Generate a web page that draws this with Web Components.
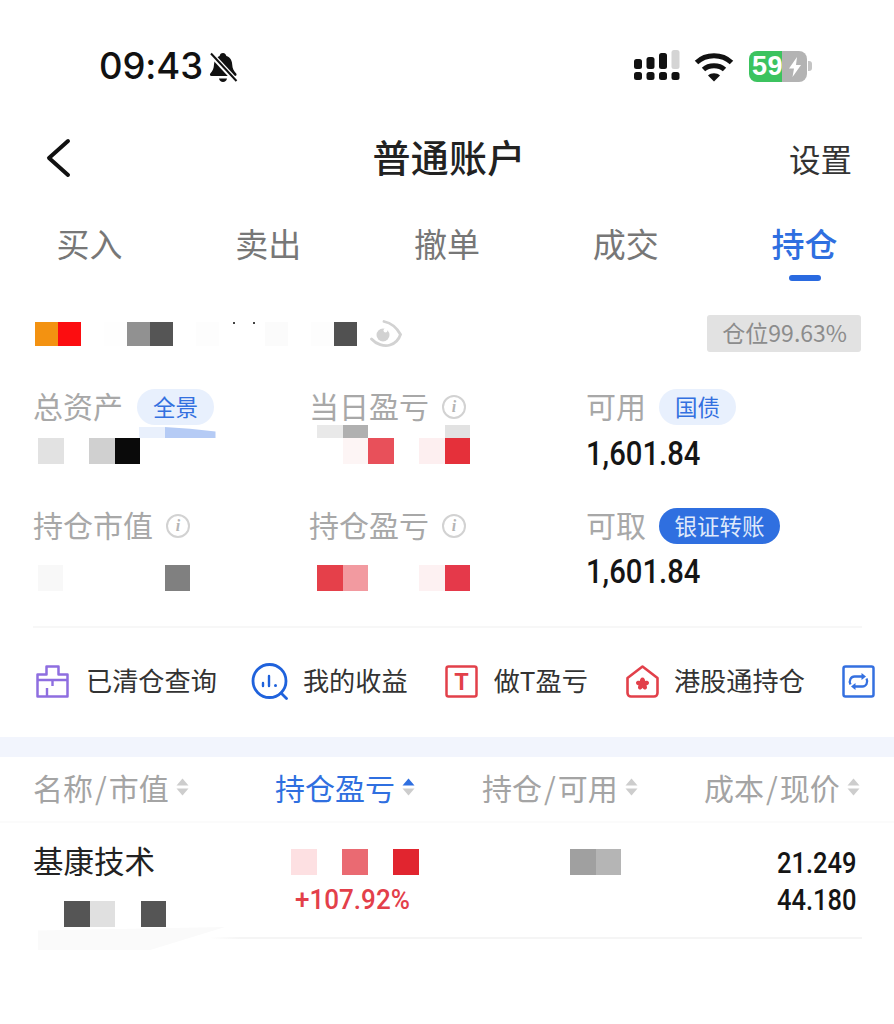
<!DOCTYPE html>
<html lang="zh"><head><meta charset="utf-8"><title>普通账户</title>
<style>
html,body{margin:0;padding:0;background:#fff}
body{width:894px;height:1024px;overflow:hidden;font-family:"Noto Sans CJK SC","Liberation Sans",sans-serif;color:#222}
</style></head><body>
<template id="t-status"><style>
:host{display:flex;align-items:center;height:132px;padding:0 82px 0 99px;box-sizing:border-box}
.time{font:500 36.500px/1 Inter,sans-serif;color:#111;letter-spacing:-.1px}
.bell{margin-left:5px;margin-top:2px}
.right{margin-left:auto;display:flex;align-items:center}
.wifi{margin-left:14px}
.bat{margin-left:15px;width:58px;height:31px;border-radius:8px;position:relative;overflow:hidden;background:linear-gradient(90deg,#3cc35f 0 33px,#b3b3b3 33px);color:#fff;font:700 27px/31px "Liberation Sans",sans-serif;padding-left:3px;box-sizing:border-box;letter-spacing:.5px}
.nub{width:4px;height:10px;background:#c4c4c4;border-radius:0 3px 3px 0;margin-left:1px}
.bolt{position:absolute;left:39px;top:6px}
</style><span class="time">09:43</span>
<svg class="bell" width="31" height="32" viewBox="0 0 31 32"><path d="M15 2c2 0 3 1.500 3.400 3 4 1.300 5.600 4.500 5.800 8.500.2 4 1.500 6.500 4 9 .8 1 .2 2.500-1.200 2.500H3.500c-1.400 0-2-1.500-1.200-2.500 2.500-2.500 3.500-5 3.700-9 .2-4 2-7.200 5.600-8.500C12 3 13 2 15 2Z" fill="#111"/><path d="M11 27.500h8c-.3 2-2 3.500-4 3.500s-3.700-1.500-4-3.500Z" fill="#111"/><path d="M3 3l25 27" stroke="#fff" stroke-width="5.500"/><path d="M3 2.500l25.500 27.500" stroke="#111" stroke-width="2"/></svg>
<span class="right">
<svg width="46" height="32" viewBox="0 0 46 32"><g fill="#111"><rect x="0" y="22" width="8" height="8" rx="2.500"/><rect x="12.500" y="22" width="8" height="8" rx="2.500"/><rect x="25" y="22" width="8" height="8" rx="2.500"/><rect x="37.500" y="22" width="8" height="8" rx="2.500"/><rect x="0" y="9" width="8" height="10" rx="2.500"/><rect x="12.500" y="7" width="8" height="12" rx="2.500"/><rect x="25" y="3" width="8" height="16" rx="2.500"/></g><rect x="37.500" y="0" width="8" height="19" rx="2.500" fill="#d4d4d4"/></svg>
<svg class="wifi" width="40" height="31" viewBox="0 0 40 31" fill="none" stroke="#111" stroke-linecap="butt"><path d="M2.500 11.500C12 2.500 28 2.500 37.500 11.500" stroke-width="5"/><path d="M9.500 18.500C15 13.500 25 13.500 30.500 18.500" stroke-width="5"/><path d="M14 24.500c3-3 9-3 12 0L20 30.500Z" fill="#111" stroke="none"/></svg>
<span class="bat">59<svg class="bolt" width="14" height="20" viewBox="0 0 14 20"><path d="M9 0 1 11.500h5L4.500 20 13 8H8Z" fill="#fff"/></svg></span><span class="nub"></span>
</span></template>

<template id="t-nav"><style>
:host{display:grid;grid-template-columns:1fr auto 1fr;align-items:center;height:52px;padding:0 42px 0 46px}
.title{font:500 38px/48px "Noto Sans CJK SC",sans-serif;color:#222;letter-spacing:.3px;padding-bottom:4px}
.set{justify-self:end;font:400 31.500px/52px "Noto Sans CJK SC",sans-serif;color:#333}
svg{display:block}
</style><svg width="26" height="40" viewBox="0 0 26 40" fill="none" stroke="#111" stroke-width="4" stroke-linecap="round" stroke-linejoin="round"><path d="M22 3 3 20l19 17"/></svg><span class="title"><slot></slot></span><span class="set"><slot name="action"></slot></span></template>

<template id="t-tabs"><style>
:host{display:grid;grid-template-columns:repeat(5,1fr);padding-top:36px}
</style><slot></slot></template>

<template id="t-tab"><style>
:host{display:flex;flex-direction:column;align-items:center;font:400 33px/46px "Noto Sans CJK SC",sans-serif;color:#777}
:host([active]){color:#2f6fe0;font-weight:500}
i{display:block;width:32px;height:6px;margin-top:9px;border-radius:3px;background:transparent}
:host([active]) i{background:#2a6ae0}
</style><slot></slot><i></i></template>

<template id="t-mosaic"><style>
:host{display:flex;align-items:flex-end}
span{display:block;flex:none}
</style></template>

<template id="t-acct"><style>
:host{display:flex;align-items:center;height:37px;margin-top:34px;padding:0 33px 0 35px}
svg{margin-left:13px;display:block}
.badge{margin-left:auto;height:37px;padding:0 14px 0 15px;background:#e2e2e2;border-radius:3px;color:#8c8c8c;font:400 23px/35px "Noto Sans CJK SC",sans-serif;box-sizing:border-box;white-space:nowrap}
</style><slot name="m"></slot><svg width="32" height="28" viewBox="0 0 32 28" fill="none" stroke="#d2d2d2"><path d="M1.500 19C6 24 14 27 20 25c5-1.500 9-6 10.500-10.500C27 8 21 3 14 1.500" stroke-width="2.800" stroke-linecap="round"/><circle cx="13" cy="15" r="6.500" fill="#d2d2d2" stroke="none"/><circle cx="15.500" cy="10.500" r="2" fill="#fff" stroke="none"/></svg><span class="badge"><slot></slot></span></template>

<template id="t-stats"><style>
:host{display:grid;grid-template-columns:276px 277px 1fr;grid-template-rows:119px 119px;margin-top:37px;padding-left:34px}
</style><slot></slot></template>

<template id="t-stat"><style>
:host{display:block}
.l{display:flex;align-items:center;height:36px;font:400 30px/32px "Noto Sans CJK SC",sans-serif;color:#a8a8a8}
::slotted(span){padding-bottom:4px;margin-left:-1px}
</style><div class="l"><slot name="label"></slot></div><slot></slot></template>

<template id="t-pill"><style>
:host{display:inline-block;height:36px;padding:0 16px;margin-left:14px;border-radius:18px;background:#e8f0fd;color:#3370e0;font:400 22.500px/35px "Noto Sans CJK SC",sans-serif}
:host([solid]){background:#2f6fe0;color:#dfe9fb;padding:0 15.500px}
</style><slot></slot></template>

<template id="t-info"><style>
:host{display:inline-block;width:24px;height:24px;margin-left:13px;margin-top:-1px;box-sizing:border-box;border:2px solid #d2d2d2;border-radius:50%;color:#b5b5b5;font:italic 700 16px/20px "Liberation Serif",serif;text-align:center}
</style>i</template>

<template id="t-num"><style>
:host{display:block;width:max-content;margin-left:-1px;font:500 34px/36px Roboto,sans-serif;color:#151515;transform:scaleX(.86);transform-origin:0 50%}
</style><slot></slot></template>

<template id="t-shortcuts"><style>
:host{display:flex;align-items:center;height:111px;margin:-1px 32px 0 33px;padding-left:3px;border-top:2px solid #f7f7f7;box-sizing:border-box;white-space:nowrap;gap:36px}
</style><slot></slot></template>

<template id="t-shortcut"><style>
:host{display:inline-flex;align-items:center;flex:none;font:400 26.200px/36px "Noto Sans CJK SC",sans-serif;color:#333;position:relative;top:-1px}
::slotted(svg){display:block;margin-right:17px;flex:none}
.t{display:block;margin-top:-3px}
</style><slot name="icon"></slot><span class="t"><slot></slot></span></template>

<template id="t-band"><style>:host{display:block;height:20px;background:#f2f5fd}</style></template>

<template id="t-grid"><style>
:host{display:grid;grid-template-columns:242px 207px 222px 1fr;padding-left:34px;padding-right:34px}
:host([head]){height:66px;align-items:center;border-bottom:2px solid #fbfbfb;box-sizing:border-box;padding-bottom:4px}
:host([row]){height:116px;padding-top:26px;box-sizing:border-box;margin-right:32px;padding-right:6px;background:linear-gradient(90deg,#fff 210px,#f5f5f5 240px) 0 100%/100% 2px no-repeat}
</style><slot></slot></template>

<template id="t-th"><style>
:host{display:inline-flex;align-items:center;font:400 30px/40px "Noto Sans CJK SC",sans-serif;color:#a4a4a4;white-space:nowrap;margin-left:-1px}
:host([active]){color:#2f6fe0}
svg{margin-left:7px;display:block}
.u{fill:#cdcdcd}.d{fill:#cdcdcd}
:host([active]) .u{fill:#2f6fe0}
::slotted(b){font-weight:400;padding:0 2px}
</style><slot></slot><svg width="13" height="20" viewBox="0 0 13 20"><path class="u" d="M6.500 1.500 12.500 8.500H.5Z"/><path class="d" d="M6.500 18.500 12.500 11.500H.5Z"/></svg></template>

<template id="t-cell"><style>
:host{display:block}
</style><slot></slot></template>

<template id="t-fig"><style>
:host{display:block;width:max-content;font:500 30px/26px Roboto,sans-serif;color:#151515;transform:scaleX(.85);transform-origin:100% 50%;margin-left:auto;margin-right:-1px}
:host([pct]){font-size:28px;color:#e3404a;transform:scaleX(.93);transform-origin:0 50%;margin-left:19px;margin-right:0;margin-top:12px}
</style><slot></slot></template>

<x-status></x-status>
<x-nav>普通账户<span slot="action">设置</span></x-nav>
<x-tabs><x-tab>买入</x-tab><x-tab>卖出</x-tab><x-tab>撤单</x-tab><x-tab>成交</x-tab><x-tab active>持仓</x-tab></x-tabs>
<x-acct><x-mosaic slot="m" w="23" h="24" cells="#f39211,#fc0d10,-,#fefefe,#919191,#555,-,#fdfdfd,radial-gradient(circle at 15px 1px,#444 1px,transparent 1.500px),radial-gradient(circle at 12px 1px,#444 1px,transparent 1.500px),#fbfbfb,-,#fdfdfd,#515151"></x-mosaic>仓位99.63%</x-acct>
<x-stats>
<x-stat><span slot="label">总资产</span><x-pill slot="label">全景</x-pill>
 <x-mosaic h="11" w="25.500" style="margin-left:105px;margin-top:2px" cells="#e9f0fc,#b5cbf5,#b5cbf5" clip></x-mosaic>
 <x-mosaic h="26" w="25.500" style="margin-left:4px;" cells="#e2e2e2,-,#d0d0d0,#0a0a0a"></x-mosaic></x-stat>
<x-stat><span slot="label">当日盈亏</span><x-info slot="label"></x-info>
 <x-mosaic h="13" w="25.500" style="margin-left:7px" cells="#e9e9e9,#b0b0b0,-,-,-,#e2e2e2"></x-mosaic>
 <x-mosaic h="26" w="25.500" style="margin-left:7px" cells="-,#fdf5f5,#e8505a,-,#fdeff0,#e5303a"></x-mosaic></x-stat>
<x-stat><span slot="label">可用</span><x-pill slot="label" style="margin-left:13px">国债</x-pill><x-num style="margin-top:10px">1,601.84</x-num></x-stat>
<x-stat><span slot="label">持仓市值</span><x-info slot="label"></x-info>
 <x-mosaic h="26" w="25.400" style="margin-left:4px;margin-top:21px" cells="#f8f8f8,-,-,-,-,#808080"></x-mosaic></x-stat>
<x-stat><span slot="label">持仓盈亏</span><x-info slot="label"></x-info>
 <x-mosaic h="26" w="25.500" style="margin-left:7px;margin-top:21px" cells="#e5404a,#f29aa0,-,-,#fdf1f2,#e5394a"></x-mosaic></x-stat>
<x-stat><span slot="label">可取</span><x-pill slot="label" solid style="margin-left:13px">银证转账</x-pill><x-num style="margin-top:9px">1,601.84</x-num></x-stat>
</x-stats>
<x-shortcuts>
<x-shortcut><svg slot="icon" width="33" height="33" viewBox="0 0 33 33" fill="none" stroke="#8e6ee0" stroke-width="2.500" stroke-linejoin="round"><path d="M1.500 9.500H10.500V1.500H22.500V9.500H31.500V31.500H1.500Z"/><path d="M1.500 15H31.500M16.500 15V21M11 31V23" stroke-width="2.400"/></svg>已清仓查询</x-shortcut>
<x-shortcut style="margin-left:-2px"><svg slot="icon" style="margin-right:14px" width="38" height="37" viewBox="0 0 38 37" fill="none" stroke="#1f62dc" stroke-width="2.800"><circle cx="18.500" cy="18" r="16.500"/><path d="M30 30l5.500 5.500" stroke-linecap="round"/><path d="M12 20v3M18 13v10" stroke-linecap="round" stroke-width="2.400"/><circle cx="24.500" cy="22.500" r="1.500" fill="#1f62dc" stroke="none"/></svg>我的收益</x-shortcut>
<x-shortcut style="margin-left:1px"><svg slot="icon" style="margin-right:16px" width="33" height="33" viewBox="0 0 33 33"><rect x="1.500" y="1.500" width="30" height="30" rx="2" fill="none" stroke="#e2404a" stroke-width="2.500"/><text x="16.500" y="25" text-anchor="middle" font-family="Liberation Sans" font-weight="700" font-size="23" fill="#e2404a">T</text></svg>做T盈亏</x-shortcut>
<x-shortcut style="margin-left:2px"><svg slot="icon" style="margin-right:15px" width="33" height="33" viewBox="0 0 33 33" fill="none" stroke="#e2404a" stroke-width="2.600" stroke-linejoin="round"><path d="M1.500 13 16.500 1.500 31.500 13V28a3.500 3.500 0 0 1-3.500 3.500H5A3.500 3.500 0 0 1 1.500 28Z"/><path d="M16.500 12.500c1.800 0 2.600 2 2.600 3.500 1.500-.5 3.600-.2 3.900 1.500.3 1.500-1.200 2.700-2.600 3 .8 1.200 1 3-.4 3.800-1.400.8-2.800-.3-3.500-1.500-.7 1.200-2.100 2.300-3.500 1.500-1.400-.8-1.200-2.600-.4-3.800-1.400-.3-2.900-1.500-2.600-3 .3-1.700 2.400-2 3.900-1.500 0-1.500.8-3.500 2.600-3.500Z" fill="#e2404a" stroke="none"/></svg>港股通持仓</x-shortcut>
<x-shortcut style="margin-left:1px"><svg slot="icon" width="33" height="33" viewBox="0 0 33 33" fill="none" stroke="#3470e0" stroke-width="2.500"><rect x="1.500" y="1.500" width="30" height="30" rx="2"/><path d="M8.500 19.500C6.500 15.500 9 11.500 12.500 11.500H20" stroke-width="2.300"/><path d="M19.500 8v7l4.500-3.500Z" fill="#3470e0" stroke="none"/><path d="M24.500 13.500C26.500 17.500 24 21.500 20.500 21.500H13" stroke-width="2.300"/><path d="M13.500 18v7L9 21.500Z" fill="#3470e0" stroke="none"/></svg></x-shortcut>
</x-shortcuts>
<x-band></x-band>
<x-grid head><span><x-th>名称<b>/</b>市值</x-th></span><span><x-th active>持仓盈亏</x-th></span><span><x-th>持仓<b>/</b>可用</x-th></span><span><x-th>成本<b>/</b>现价</x-th></span></x-grid>
<x-grid row>
<x-cell><span style="display:block;font:400 30.500px/26px 'Noto Sans CJK SC',sans-serif;color:#222;margin-top:-2px;margin-left:-1px">基康技术</span><x-mosaic h="26" w="25.500" style="margin-left:30px;margin-top:28px" cells="#555,#e0e0e0,-,#555"></x-mosaic><span style="display:block;width:187px;height:23px;margin-left:4px;background:#fafafa;clip-path:polygon(0 15%,100% 0,60% 100%,0 100%)"></span></x-cell>
<x-cell><x-mosaic h="26" w="25.500" style="margin-left:15px" cells="#fde0e2,-,#ea6a72,-,#e1252f"></x-mosaic><x-fig pct>+107.92%</x-fig></x-cell>
<x-cell><x-mosaic h="26" w="25.500" style="margin-left:87px" cells="#a0a0a0,#b5b5b5"></x-mosaic></x-cell>
<x-cell style="padding-top:1px"><x-fig>21.249</x-fig><x-fig style="margin-top:11px">44.180</x-fig></x-cell>
</x-grid>
<script>
function simple(name,tid){customElements.define(name,class extends HTMLElement{constructor(){super();this.attachShadow({mode:'open'}).appendChild(document.getElementById(tid).content.cloneNode(true));}});}
[['x-status','t-status'],['x-nav','t-nav'],['x-tabs','t-tabs'],['x-tab','t-tab'],['x-acct','t-acct'],['x-stats','t-stats'],['x-stat','t-stat'],['x-pill','t-pill'],['x-info','t-info'],['x-num','t-num'],['x-shortcuts','t-shortcuts'],['x-shortcut','t-shortcut'],['x-band','t-band'],['x-grid','t-grid'],['x-th','t-th'],['x-cell','t-cell'],['x-fig','t-fig']].forEach(a=>simple(a[0],a[1]));
customElements.define('x-mosaic',class extends HTMLElement{
 constructor(){super();this.attachShadow({mode:'open'}).appendChild(document.getElementById('t-mosaic').content.cloneNode(true));}
 connectedCallback(){
  const w=this.getAttribute('w'),h=this.getAttribute('h'),clip=this.hasAttribute('clip');
  this.getAttribute('cells').split(/,(?![^(]*\))/).forEach((c,i)=>{
   const s=document.createElement('span');
   s.style.cssText=`width:${w}px;height:${h}px;background:${c==='-'?'transparent':c}`;
   if(clip&&i===1)s.style.clipPath='polygon(0 0,100% 15%,100% 100%,0 100%)';
   if(clip&&i===2)s.style.clipPath='polygon(0 15%,100% 40%,100% 100%,0 100%)';
   this.shadowRoot.appendChild(s);
  });
 }
});
</script>
</body></html>
